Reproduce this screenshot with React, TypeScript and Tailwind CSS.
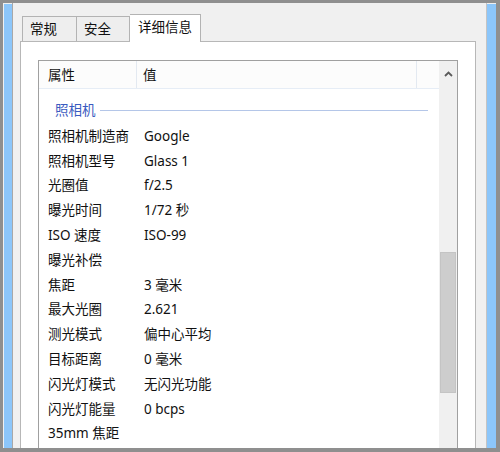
import React from 'react';

const rows: [string, string][] = [
  ['照相机制造商', 'Google'],
  ['照相机型号', 'Glass 1'],
  ['光圈值', 'f/2.5'],
  ['曝光时间', '1/72 秒'],
  ['ISO 速度', 'ISO-99'],
  ['曝光补偿', ''],
  ['焦距', '3 毫米'],
  ['最大光圈', '2.621'],
  ['测光模式', '偏中心平均'],
  ['目标距离', '0 毫米'],
  ['闪光灯模式', '无闪光功能'],
  ['闪光灯能量', '0 bcps'],
  ['35mm 焦距', ''],
];

const font = { fontFamily: '"Noto Sans", "Noto Sans CJK SC", sans-serif' };

export default function App() {
  return (
    <div
      className="w-[500px] h-[452px] bg-[#8f8f8f] pt-[3px] pl-[3px] pr-[4px] pb-[4px] overflow-hidden text-[13.5px] text-[#111111]"
      style={font}
    >
      <div className="flex h-full bg-[#f0f0f0]">
        {/* left blue strip */}
        <div className="w-[1px] shrink-0" />
        <div className="w-[8px] mt-[1px] shrink-0 bg-[#8cc6fa]" />
        <div className="w-[1px] shrink-0 bg-[#a8a8a8]" />

        {/* content */}
        <div className="flex-1 flex flex-col pl-[7px] pr-[10px] min-w-0">
          {/* tabs */}
          <div className="flex items-end h-[38px] pl-[2px] shrink-0">
            <div className="w-[55px] h-[25px] border border-b-0 border-[#b3b3b3] bg-[#eeeeee] flex items-center pl-[7px] pt-[1px] leading-none">
              常规
            </div>
            <div className="w-[53px] h-[25px] border border-l-0 border-b-0 border-[#b3b3b3] bg-[#eeeeee] flex items-center pl-[7px] pt-[1px] leading-none">
              安全
            </div>
            <div className="w-[71px] h-[28px] -mb-[1px] relative z-10 border border-l-0 border-b-0 border-[#b3b3b3] bg-white flex items-center pl-[8px] pb-[1px] leading-none">
              详细信息
            </div>
          </div>

          {/* panel */}
          <div className="flex-1 border border-b-0 border-[#b7b7b7] bg-white px-[17px] pt-[18px] flex min-h-0">
            <div className="flex-1 border border-b-0 border-[#a0a0a0] flex min-h-0 overflow-hidden">
              {/* list */}
              <div className="flex-1 flex flex-col min-w-0">
                <div className="flex h-[28px] shrink-0 bg-[#fcfcfc] border-b border-[#e6edf6]">
                  <div className="w-[98px] border-r border-[#e3e9f1] flex items-center pl-[9px] pt-[2px]">属性</div>
                  <div className="w-[280px] border-r border-[#e3e9f1] flex items-center pl-[6px] pt-[2px]">值</div>
                  <div className="flex-1" />
                </div>
                <div className="pt-[8px]">
                  <div className="h-[26px] flex items-center pl-[16px] pr-[11px]">
                    <span className="text-[#3a5bc0]">照相机</span>
                    <div className="flex-1 h-[1px] ml-[4px] bg-[#b4c6e8]" />
                  </div>
                  {rows.map(([k, v]) => (
                    <div key={k} className="h-[24.8px] flex items-center pt-[1px]">
                      <div className="w-[105px] pl-[9px] whitespace-nowrap">{k}</div>
                      <div className="whitespace-nowrap">{v}</div>
                    </div>
                  ))}
                </div>
              </div>

              {/* scrollbar */}
              <div className="w-[18px] shrink-0 bg-[#f0f0f0] flex flex-col">
                <div className="h-[26px] flex items-center justify-center shrink-0">
                  <svg width="9" height="6" viewBox="0 0 9 6">
                    <path d="M1 5 L4.5 1.5 L8 5" fill="none" stroke="#5a5a5a" strokeWidth="1.8" />
                  </svg>
                </div>
                <div className="h-[165px] shrink-0" />
                <div className="h-[141px] mx-[1px] bg-[#cdcdcd] border border-[#c4c4c4] shrink-0" />
              </div>
            </div>
          </div>
        </div>

        {/* right strip */}
        <div className="w-[1px] shrink-0 bg-[#c4c4c4]" />
        <div className="w-[9px] mt-[1px] shrink-0 bg-[#8cc6fa]" />
      </div>
    </div>
  );
}
